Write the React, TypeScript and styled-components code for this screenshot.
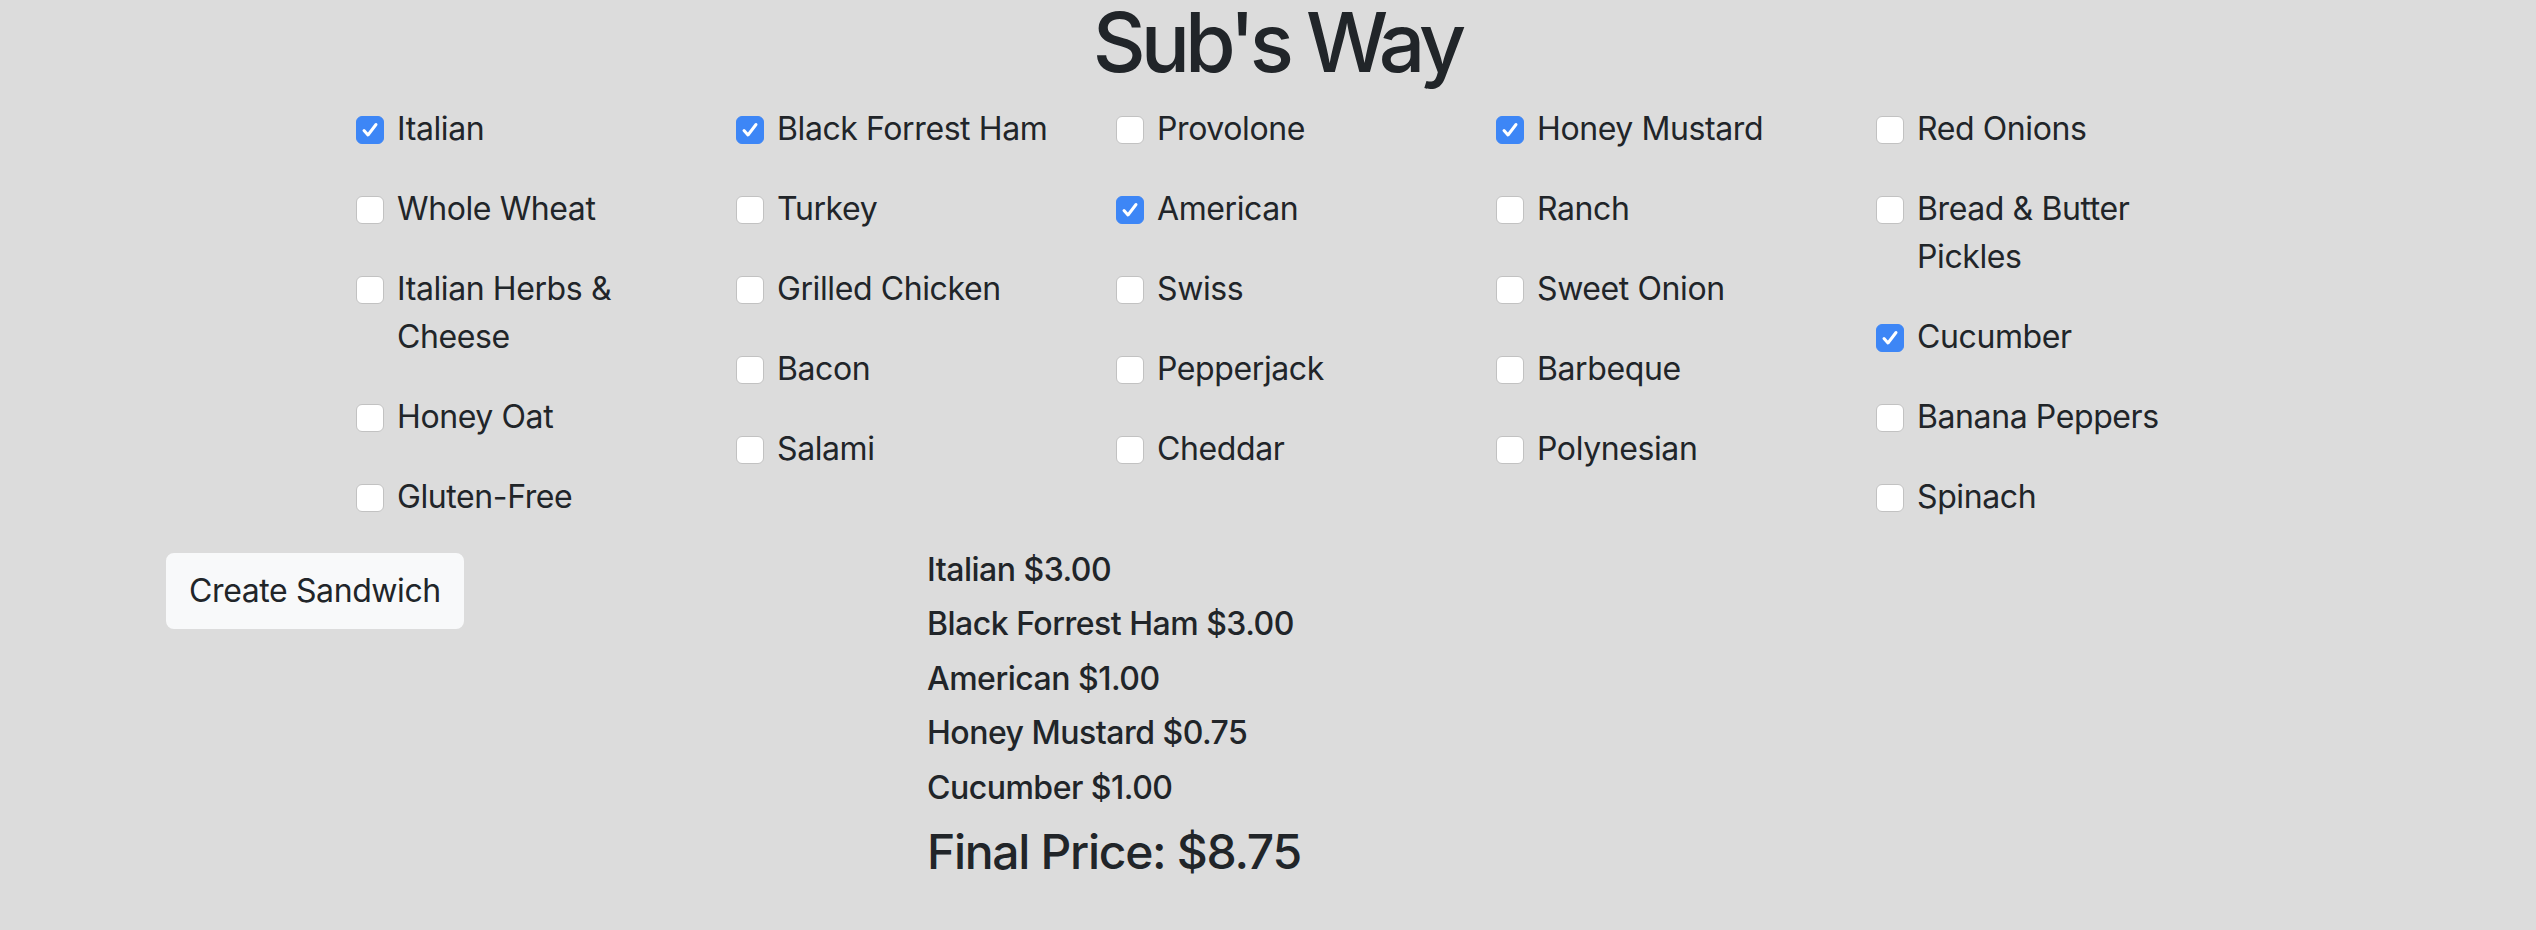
import styled, { createGlobalStyle } from "styled-components";

const GlobalStyle = createGlobalStyle`
  body {
    margin: 0;
    background: #dcdcdc;
    font-family: Inter, "Noto Sans", "Liberation Sans", sans-serif;
    color: #212529;
  }
`;

type Item = { name: string; checked?: boolean };

const columns: Item[][] = [
  [
    { name: "Italian", checked: true },
    { name: "Whole Wheat" },
    { name: "Italian Herbs & Cheese" },
    { name: "Honey Oat" },
    { name: "Gluten-Free" },
  ],
  [
    { name: "Black Forrest Ham", checked: true },
    { name: "Turkey" },
    { name: "Grilled Chicken" },
    { name: "Bacon" },
    { name: "Salami" },
  ],
  [
    { name: "Provolone" },
    { name: "American", checked: true },
    { name: "Swiss" },
    { name: "Pepperjack" },
    { name: "Cheddar" },
  ],
  [
    { name: "Honey Mustard", checked: true },
    { name: "Ranch" },
    { name: "Sweet Onion" },
    { name: "Barbeque" },
    { name: "Polynesian" },
  ],
  [
    { name: "Red Onions" },
    { name: "Bread & Butter Pickles" },
    { name: "Cucumber", checked: true },
    { name: "Banana Peppers" },
    { name: "Spinach" },
  ],
];

const summary = [
  "Italian $3.00",
  "Black Forrest Ham $3.00",
  "American $1.00",
  "Honey Mustard $0.75",
  "Cucumber $1.00",
];

function Check({ checked }: { checked?: boolean }) {
  return (
    <Box checked={checked}>
      {checked && (
        <svg width="28" height="28" viewBox="0 0 28 28">
          <path
            d="M8 14.5 L12 19 L20 8.5"
            fill="none"
            stroke="#fff"
            strokeWidth="3"
            strokeLinecap="round"
            strokeLinejoin="round"
          />
        </svg>
      )}
    </Box>
  );
}

function App() {
  return (
    <>
      <GlobalStyle />
      <Title>Sub's Way</Title>
      <Options>
        {columns.map((col, i) => (
          <Column key={i}>
            {col.map((item) => (
              <Option key={item.name}>
                <Check checked={item.checked} />
                <Label>{item.name}</Label>
              </Option>
            ))}
          </Column>
        ))}
      </Options>
      <Bottom>
        <div>
          <Button>Create Sandwich</Button>
        </div>
        <Summary>
          {summary.map((line) => (
            <Line key={line}>{line}</Line>
          ))}
          <Total>Final Price: $8.75</Total>
        </Summary>
      </Bottom>
    </>
  );
}

const Title = styled.h1`
  margin: 0;
  padding-top: 2px;
  padding-left: 18px;
  font-size: 82px;
  font-weight: 500;
  line-height: 1;
  letter-spacing: -5px;
  text-align: center;
`;

const Options = styled.section`
  display: grid;
  grid-template-columns: repeat(5, 380px);
  padding-left: 356px;
  margin-top: 21px;
`;

const Column = styled.div`
  display: flex;
  flex-direction: column;
`;

const Option = styled.label`
  display: flex;
  align-items: flex-start;
  gap: 13px;
  margin-bottom: 32px;
  font-size: 32px;
  line-height: 48px;
  letter-spacing: -0.4px;
`;

const Box = styled.span<{ checked?: boolean }>`
  flex: 0 0 28px;
  width: 28px;
  height: 28px;
  margin-top: 11px;
  box-sizing: border-box;
  border-radius: 6px;
  background: ${(p) => (p.checked ? "#3d86f6" : "#ffffff")};
  border: 1px solid ${(p) => (p.checked ? "#3d86f6" : "#c2c2c2")};
  display: flex;
  align-items: center;
  justify-content: center;
  svg {
    margin: -1px;
  }
`;

const Label = styled.span`
  max-width: 290px;
`;

const Bottom = styled.section`
  display: grid;
  grid-template-columns: 761px 1fr;
  padding-left: 166px;
`;

const Button = styled.button`
  width: 298px;
  font-family: inherit;
  font-size: 32px;
  line-height: 48px;
  letter-spacing: -0.4px;
  color: #212529;
  background: #f8f9fa;
  border: 2px solid #f8f9fa;
  border-radius: 8px;
  padding: 12px 0;
  cursor: pointer;
`;

const Summary = styled.div`
  display: flex;
  flex-direction: column;
  margin-top: -2px;
`;

const Line = styled.h6`
  margin: 0 0 16px;
  font-size: 32px;
  font-weight: 500;
  line-height: 1.2;
  letter-spacing: -0.5px;
`;

const Total = styled.h4`
  margin: 0 0 16px;
  font-size: 48px;
  font-weight: 500;
  line-height: 1.2;
  letter-spacing: -1.3px;
`;

export default App;
